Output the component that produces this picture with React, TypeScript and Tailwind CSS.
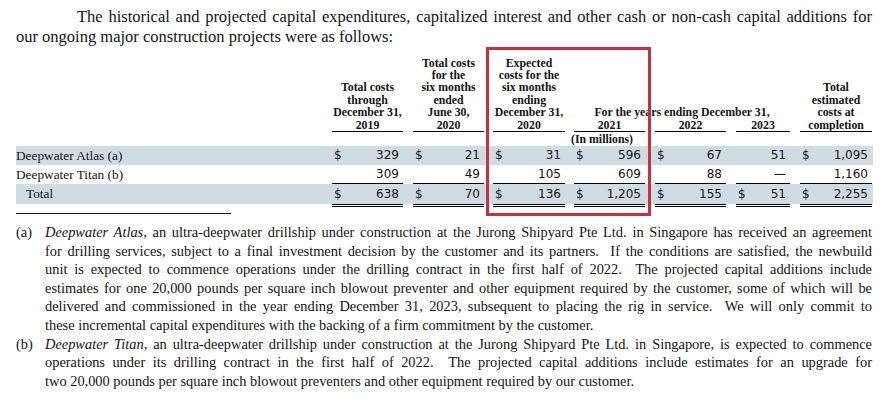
import React from 'react';

type Cell = [string, string];

interface Row {
  label: string;
  indent?: boolean;
  shaded: boolean;
  vals: Cell[];
}

const cols = [
  'w-[71px]',
  'ml-[10px] w-[71px]',
  'ml-[9px] w-[72px]',
  'ml-[9px] w-[71px]',
  'ml-[10px] w-[71px]',
  'ml-[10px] w-[54px]',
  'ml-[10px] w-[72px]',
];

const rows: Row[] = [
  {
    label: 'Deepwater Atlas (a)',
    shaded: true,
    vals: [['$', '329'], ['$', '21'], ['$', '31'], ['$', '596'], ['$', '67'], ['', '51'], ['$', '1,095']],
  },
  {
    label: 'Deepwater Titan (b)',
    shaded: false,
    vals: [['', '309'], ['', '49'], ['', '105'], ['', '609'], ['', '88'], ['', '—'], ['', '1,160']],
  },
  {
    label: 'Total',
    indent: true,
    shaded: true,
    vals: [['$', '638'], ['$', '70'], ['$', '136'], ['$', '1,205'], ['$', '155'], ['$', '51'], ['$', '2,255']],
  },
];

const Line = ({ children, last }: { children: React.ReactNode; last?: boolean }) => (
  <div className={last ? 'text-left' : 'text-justify [text-align-last:justify]'}>{children}</div>
);

const NumCell = ({ cell, cls, border }: { cell: Cell; cls: string; border: string }) => (
  <div className={`${cls} ${border} flex justify-between pl-[2px] pr-[4px] font-['DejaVu_Sans',sans-serif] text-[12px]`}>
    <span>{cell[0]}</span>
    <span>{cell[1]}</span>
  </div>
);

export default function App() {
  return (
    <div className="relative w-[887px] h-[407px] overflow-hidden bg-white text-[#141414] font-['Liberation_Serif',serif]">
      {/* intro */}
      <div className="ml-[16px] w-[856px] pt-[7px] text-[16.5px] leading-[20px]">
        <Line>
          <span className="pl-[61px]">The historical and projected capital expenditures, capitalized interest and other cash or non-cash capital additions for</span>
        </Line>
        <Line last>our ongoing major construction projects were as follows:</Line>
      </div>

      {/* table */}
      <div className="ml-[16px] w-[857px]">
        <div className="flex items-end h-[85px] font-bold text-[11.8px] leading-[12.4px] text-center">
          <div className="w-[316px]" />
          <div className="w-[71px] border-b border-black">Total costs<br />through<br />December 31,<br />2019</div>
          <div className="ml-[10px] w-[71px] border-b border-black">Total costs<br />for the<br />six months<br />ended<br />June 30,<br />2020</div>
          <div className="ml-[9px] w-[72px] border-b border-black">Expected<br />costs for the<br />six months<br />ending<br />December 31,<br />2020</div>
          <div className="ml-[9px] w-[216px] flex flex-col">
            <div className="whitespace-nowrap">For the years ending December 31,</div>
            <div className="flex">
              <div className="w-[71px] border-b border-black">2021</div>
              <div className="ml-[10px] w-[71px] border-b border-black">2022</div>
              <div className="ml-[10px] w-[54px] border-b border-black">2023</div>
            </div>
          </div>
          <div className="ml-[10px] w-[72px] border-b border-black">Total<br />estimated<br />costs at<br />completion</div>
        </div>

        <div className="flex h-[14px] font-bold text-[11.8px] leading-[14px]">
          <div className="w-[316px]" />
          <div className="w-[540px] text-center">(In millions)</div>
        </div>

        {rows.map((row, r) => (
          <div
            key={row.label}
            className={`flex items-start leading-[19px] ${r === 2 ? 'h-[20px]' : 'h-[19px]'} ${row.shaded ? 'bg-[#d0dce4]' : ''}`}
          >
            <div className={`w-[316px] text-[13.3px] ${row.indent ? 'pl-[10px]' : ''}`}>{row.label}</div>
            {row.vals.map((v, i) => (
              <NumCell
                key={i}
                cell={v}
                cls={cols[i]}
                border={r === 1 ? 'h-[19px] border-b border-black' : r === 2 ? 'h-[23px] leading-[20px] border-b-[3px] border-double border-black' : ''}
              />
            ))}
          </div>
        ))}
      </div>

      <div className="ml-[16px] mt-[9px] h-px w-[215px] bg-[#141414]" />

      {/* footnotes */}
      <div className="ml-[16px] mt-[9px] w-[856px] text-[14.4px] leading-[18.6px]">
        <div className="flex">
          <div className="w-[29px]">(a)</div>
          <div className="w-[827px]">
            <Line><i>Deepwater Atlas</i>, an ultra-deepwater drillship under construction at the Jurong Shipyard Pte Ltd. in Singapore has received an agreement</Line>
            <Line>for drilling services, subject to a final investment decision by the customer and its partners.&nbsp; If the conditions are satisfied, the newbuild</Line>
            <Line>unit is expected to commence operations under the drilling contract in the first half of 2022.&nbsp; The projected capital additions include</Line>
            <Line>estimates for one 20,000 pounds per square inch blowout preventer and other equipment required by the customer, some of which will be</Line>
            <Line>delivered and commissioned in the year ending December 31, 2023, subsequent to placing the rig in service.&nbsp; We will only commit to</Line>
            <Line last>these incremental capital expenditures with the backing of a firm commitment by the customer.</Line>
          </div>
        </div>
        <div className="flex">
          <div className="w-[29px]">(b)</div>
          <div className="w-[827px]">
            <Line><i>Deepwater Titan</i>, an ultra-deepwater drillship under construction at the Jurong Shipyard Pte Ltd. in Singapore, is expected to commence</Line>
            <Line>operations under its drilling contract in the first half of 2022.&nbsp; The projected capital additions include estimates for an upgrade for</Line>
            <Line last>two 20,000 pounds per square inch blowout preventers and other equipment required by our customer.</Line>
          </div>
        </div>
      </div>

      {/* highlight box */}
      <div className="absolute left-[486px] top-[47px] w-[165px] h-[169px] border-[3px] border-[#c9303e]" />
    </div>
  );
}
